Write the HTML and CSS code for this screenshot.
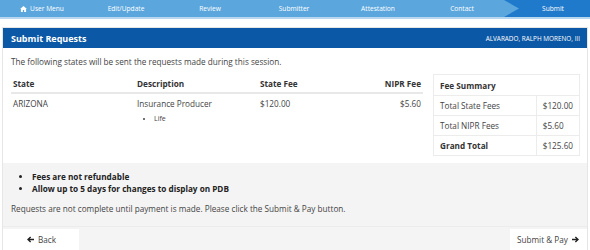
FILE: index.html
```html
<!DOCTYPE html>
<html>
<head>
<meta name="viewport" content="width=device-width, initial-scale=1.0">
<title>Submit Requests</title>
<link rel="stylesheet" href="styles.css">
</head>
<body>
<!-- wizard steps -->
<div class="steps">
  <div class="step"><svg class="home" viewBox="0 0 16 14" width="7" height="6"><path d="M8 0L0 7h2v7h4.5V9.5h3V14H14V7h2z" fill="#fff"/></svg>User Menu</div>
  <div class="step">Edit/Update</div>
  <div class="step">Review</div>
  <div class="step">Submitter</div>
  <div class="step">Attestation</div>
  <div class="step">Contact</div>
  <div class="step active">Submit</div>
</div>

<div class="panel">
  <div class="panel-head">
    <span class="title">Submit Requests</span>
    <span class="who">ALVARADO, RALPH MORENO, III</span>
  </div>
  <div class="panel-body">
    <p class="intro">The following states will be sent the requests made during this session.</p>
    <div class="cols">
      <table class="requests">
        <thead>
          <tr><th>State</th><th>Description</th><th>State Fee</th><th class="num">NIPR Fee</th></tr>
        </thead>
        <tbody>
          <tr>
            <td>ARIZONA</td>
            <td>Insurance Producer
              <ul class="lines"><li>Life</li></ul>
            </td>
            <td>$120.00</td>
            <td class="num">$5.60</td>
          </tr>
        </tbody>
      </table>
      <table class="summary">
        <tr><th colspan="2">Fee Summary</th></tr>
        <tr><td>Total State Fees</td><td class="amt">$120.00</td></tr>
        <tr><td>Total NIPR Fees</td><td class="amt">$5.60</td></tr>
        <tr><td class="bold">Grand Total</td><td class="amt">$125.60</td></tr>
      </table>
    </div>
  </div>
  <div class="notes">
    <ul>
      <li>Fees are not refundable</li>
      <li>Allow up to 5 days for changes to display on PDB</li>
    </ul>
    <p>Requests are not complete until payment is made. Please click the Submit &amp; Pay button.</p>
  </div>
  <div class="actions">
    <button class="btn back"><svg class="arrow" viewBox="0 0 10 10" width="7" height="7"><path d="M0 5L4.5 0.7L5.9 2.1L3.9 4H10V6H3.9L5.9 7.9L4.5 9.3Z" fill="#222"/></svg>Back</button>
    <button class="btn next">Submit &amp; Pay<svg class="arrow" viewBox="0 0 10 10" width="7" height="7"><path d="M10 5L5.5 0.7L4.1 2.1L6.1 4H0V6H6.1L4.1 7.9L5.5 9.3Z" fill="#222"/></svg></button>
  </div>
</div>
</body>
</html>
```

FILE: styles.css
```css
* {box-sizing: border-box;}

body {
  margin: 0;
  font-family: "Open Sans", "Liberation Sans", sans-serif;
  font-size: 8.2px;
  line-height: 11px;
  color: #444;
  background: #fff;
}

/* wizard steps */
.steps {
  display: flex;
  height: 19px;
  background: #5ba7dd;
  border-bottom: 2px solid #b7d6ef;
}

.step {
  flex: 1;
  display: flex;
  align-items: center;
  justify-content: center;
  color: #fff;
  font-size: 6.6px;
}

.step.active {
  flex: 0 0 86px;
  padding-left: 12px;
  background: #1f7acb;
  clip-path: polygon(0 0, 100% 0, 100% 100%, 0 100%, 15px 50%);
}

.home {
  margin-right: 3px;
}

/* panel */
.panel {
  margin: 8px 2px 0;
  border: 1px solid #e6e6e6;
  border-bottom: 0;
}

.panel-head {
  display: flex;
  justify-content: space-between;
  align-items: center;
  height: 20px;
  padding: 0 7px 0 8px;
  background: #0b58a6;
  color: #fff;
}

.title {
  font-size: 9px;
  font-weight: bold;
}

.who {
  font-size: 6.4px;
}

.panel-body {
  padding: 8px 7px 7px 8px;
}

.intro {
  margin: 0 0 7px;
}

.cols {
  display: flex;
  justify-content: space-between;
  align-items: flex-start;
}

.requests {
  width: 412px;
  border-collapse: collapse;
}

.requests th {
  text-align: left;
  font-weight: bold;
  color: #333;
  padding: 3.5px 2px;
  border-bottom: 2px solid #e8e8e8;
}

.requests td {
  vertical-align: top;
  padding: 3.5px 2px;
}

.requests th:nth-child(1) {width: 124px;}
.requests th:nth-child(2) {width: 123px;}

.requests .num {
  text-align: right;
}

.lines {
  margin: 4px 0 0;
  padding-left: 17px;
  font-size: 7px;
}

.summary {
  width: 147px;
  border-collapse: collapse;
  border: 1px solid #ececec;
}

.summary th {
  text-align: left;
  color: #333;
  padding: 4.5px 6px;
}

.summary td {
  padding: 4px 6px;
  border-top: 1px solid #ececec;
}

.summary .amt {
  border-left: 1px solid #ececec;
  width: 40px;
}

.bold {
  font-weight: bold;
  color: #333;
}

/* notes */
.notes {
  background: #f4f4f4;
  padding: 8px 8px 12px;
}

.notes ul {
  margin: 0;
  padding-left: 21px;
  font-weight: bold;
  color: #222;
  line-height: 12px;
}

.notes p {
  margin: 7.5px 0 0;
}

.actions {
  display: flex;
  justify-content: space-between;
  background: #f4f4f4;
  border-top: 1px solid #ececec;
  padding-top: 2px;
}

.btn {
  display: flex;
  align-items: center;
  font-family: inherit;
  font-size: 8.2px;
  color: #444;
  background: #fff;
  border: 0;
  height: 22px;
}

.back {
  width: 76px;
  padding: 0 0 0 24px;
}

.back .arrow {
  margin-right: 4px;
}

.next {
  width: 77px;
  padding: 0 0 0 7px;
}

.next .arrow {
  margin-left: 4px;
}
```
